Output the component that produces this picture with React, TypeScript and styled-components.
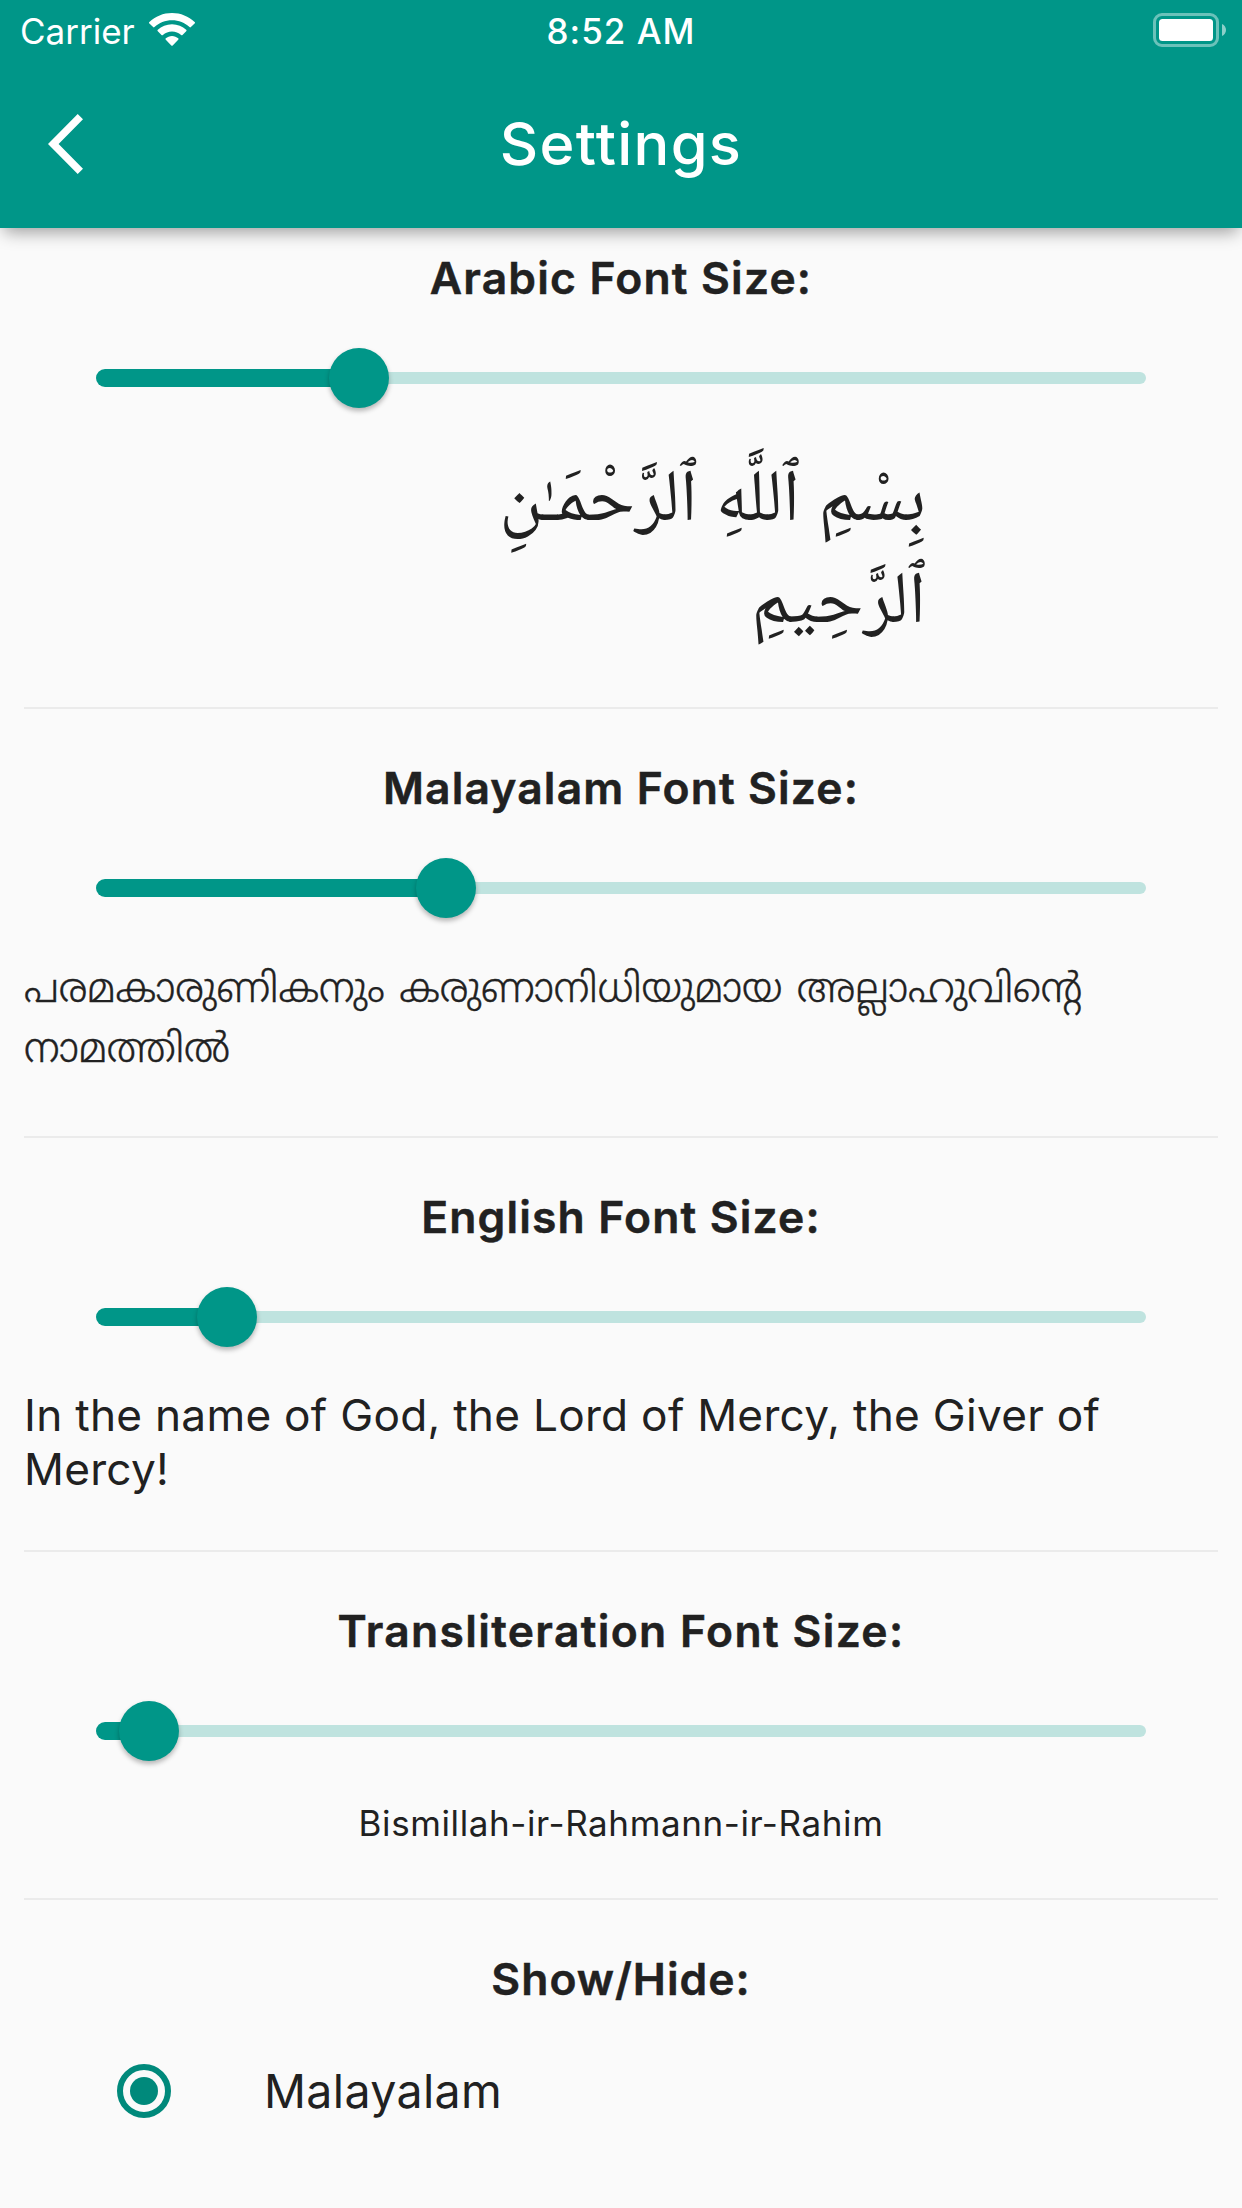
import React from 'react';
import styled, { createGlobalStyle } from 'styled-components';

const teal = '#009688';
const ink = '#212121';

const GlobalStyle = createGlobalStyle`
  * { box-sizing: border-box; }
  body { margin: 0; background: #fafafa; }
`;

const Screen = styled.main`
  width: 1242px;
  height: 2208px;
  overflow: hidden;
  background: #fafafa;
  color: ${ink};
  font-family: Inter, "Liberation Sans", sans-serif;
`;

const Header = styled.header`
  height: 228px;
  background: ${teal};
  color: #fff;
  box-shadow: 0 8px 16px -4px rgba(0, 0, 0, 0.38);
`;

const StatusBar = styled.div`
  display: grid;
  grid-template-columns: 1fr auto 1fr;
  align-items: center;
  height: 60px;
  padding: 2px 16px 0 16px;
  font-size: 35px;
  line-height: 58px;
`;

const Carrier = styled.div`
  display: flex;
  align-items: center;
  gap: 14px;
  padding-left: 4px;
  svg { margin-bottom: 2px; }
`;

const Clock = styled.time`
  font-weight: 500;
  letter-spacing: 1px;
`;

const Battery = styled.svg`
  justify-self: end;
  margin-bottom: 2px;
`;

const TitleBar = styled.div`
  display: grid;
  grid-template-columns: 168px 1fr 168px;
  align-items: center;
  height: 168px;
`;

const BackButton = styled.button`
  display: flex;
  width: 131px;
  height: 144px;
  padding: 0 0 0 48px;
  border: 0;
  align-items: center;
  background: none;
  color: inherit;
`;

const Title = styled.h1`
  margin: 0;
  padding-bottom: 2px;
  text-align: center;
  font-size: 59.5px;
  line-height: 80px;
  font-weight: 500;
  letter-spacing: 1.3px;
`;

const Section = styled.section<{ $first?: boolean }>`
  padding-top: ${p => (p.$first ? 23 : 52)}px;
`;

const Heading = styled.h2<{ $spacing: number }>`
  margin: 0;
  text-align: center;
  font-size: 44.4px;
  line-height: 54px;
  font-weight: 600;
  letter-spacing: ${p => p.$spacing}px;
  -webkit-text-stroke: 0.5px ${ink};
`;

const Slider = styled.div`
  display: flex;
  align-items: center;
  height: 142px;
  margin: 2px 96px 0;
`;

const Filled = styled.div`
  height: 18px;
  border-radius: 9px 0 0 9px;
  background: ${teal};
`;

const Remaining = styled.div`
  flex: 1;
  height: 12px;
  border-radius: 0 6px 6px 0;
  background: #bfe3df;
`;

const Thumb = styled.div`
  z-index: 1;
  flex: none;
  width: 60px;
  height: 60px;
  margin: 0 -30px;
  border-radius: 50%;
  background: ${teal};
  box-shadow: 0 3px 5px rgba(0, 0, 0, 0.28);
`;

const Preview = styled.div<{ $height: number }>`
  height: ${p => p.$height}px;
  padding: 0 24px;
`;

const ArabicText = styled.p`
  width: 902px;
  margin: 0;
  padding-top: 4px;
  font-family: "Noto Naskh Arabic", "DejaVu Sans", serif;
  font-size: 73.5px;
  line-height: 102px;
  word-spacing: 2px;
`;

const MalayalamText = styled.p`
  margin: 0;
  padding-top: 3px;
  font-family: "Noto Sans Malayalam", "Noto Sans", sans-serif;
  font-size: 40.4px;
  font-weight: 300;
  line-height: 60px;
  word-spacing: 2px;
  -webkit-text-stroke: 0.4px ${ink};
`;

const EnglishText = styled.p`
  margin: 0;
  font-size: 44.2px;
  line-height: 54px;
  letter-spacing: 0.26px;
`;

const Transliteration = styled.p`
  margin: 0;
  text-align: center;
  font-size: 35px;
  line-height: 43px;
  letter-spacing: 0.6px;
`;

const Divider = styled.hr`
  height: 2px;
  margin: 0 24px;
  border: 0;
  background: #ebebeb;
`;

const Option = styled.label`
  display: flex;
  align-items: center;
  height: 144px;
  margin-top: 13px;
  padding-left: 117px;
  gap: 93px;
  font-size: 46.5px;
  line-height: 54px;
  letter-spacing: 0.35px;
`;

const RadioRing = styled.span`
  display: grid;
  place-items: center;
  width: 54px;
  height: 54px;
  border: 6px solid #00897b;
  border-radius: 50%;
`;

const RadioDot = styled.span`
  width: 28px;
  height: 28px;
  border-radius: 50%;
  background: #00897b;
`;

function SizeSlider({ value }: { value: number }) {
  return (
    <Slider role="slider" aria-valuenow={value}>
      <Filled style={{ width: `${value * 100}%` }} />
      <Thumb />
      <Remaining />
    </Slider>
  );
}

function WifiIcon() {
  return (
    <svg width="46" height="34" viewBox="0 0 46 34" fill="#fff">
      <path d="M23 0C14.3 0 6.300 3.400.4 9.000a1 1 0 0 0 0 1.500l3.700 3.600a1 1 0 0 0 1.400 0C10.100 9.800 16.200 7.200 23 7.200s12.900 2.600 17.500 6.900a1 1 0 0 0 1.400 0l3.700-3.600a1 1 0 0 0 0-1.500C39.700 3.400 31.700 0 23 0z" />
      <path d="M23 11.200c-5.500 0-10.500 2.100-14.200 5.600a1 1 0 0 0 0 1.500l3.700 3.700a1 1 0 0 0 1.400 0c2.400-2.200 5.600-3.600 9.100-3.600s6.700 1.400 9.100 3.600a1 1 0 0 0 1.400 0l3.700-3.700a1 1 0 0 0 0-1.500C33.500 13.300 28.500 11.200 23 11.200z" />
      <path d="M23 22.900c-2.400 0-4.600.9-6.200 2.400a1 1 0 0 0 0 1.500l5.500 5.700a1 1 0 0 0 1.400 0l5.500-5.700a1 1 0 0 0 0-1.500c-1.600-1.500-3.800-2.400-6.200-2.400z" />
    </svg>
  );
}

function BatteryIcon() {
  return (
    <Battery width="73" height="34" viewBox="0 0 73 34">
      <rect x="1.500" y="1.500" width="63" height="31" rx="7.500" fill="none" stroke="#fff" strokeOpacity=".42" strokeWidth="3" />
      <rect x="6" y="6" width="54" height="22" rx="3.500" fill="#fff" />
      <path d="M69 11c2.600 1.200 4 3.400 4 6s-1.400 4.800-4 6z" fill="#fff" fillOpacity=".55" />
    </Battery>
  );
}

export default function App() {
  return (
    <Screen>
      <GlobalStyle />
      <Header>
        <StatusBar>
          <Carrier>
            Carrier
            <WifiIcon />
          </Carrier>
          <Clock>8:52 AM</Clock>
          <BatteryIcon />
        </StatusBar>
        <TitleBar>
          <BackButton aria-label="Back">
            <svg width="35" height="60" viewBox="0 0 35 60" fill="#fff">
              <path d="M35 5.300 29.700 0 0 30l29.700 30 5.300-5.300L10.600 30z" />
            </svg>
          </BackButton>
          <Title>Settings</Title>
        </TitleBar>
      </Header>

      <Section $first>
        <Heading $spacing={1.18}>Arabic Font Size:</Heading>
        <SizeSlider value={0.25} />
        <Preview $height={258}>
          <ArabicText dir="rtl" lang="ar">
            بِسْمِ ٱللَّهِ ٱلرَّحْمَـٰنِ
            <br />
            ٱلرَّحِيمِ
          </ArabicText>
        </Preview>
      </Section>
      <Divider />

      <Section>
        <Heading $spacing={1.14}>Malayalam Font Size:</Heading>
        <SizeSlider value={1 / 3} />
        <Preview $height={177}>
          <MalayalamText lang="ml">
            പരമകാരുണികനും കരുണാനിധിയുമായ അല്ലാഹുവിന്റെ
            <br />
            നാമത്തിൽ
          </MalayalamText>
        </Preview>
      </Section>
      <Divider />

      <Section>
        <Heading $spacing={1.16}>English Font Size:</Heading>
        <SizeSlider value={0.125} />
        <Preview $height={162}>
          <EnglishText>
            In the name of God, the Lord of Mercy, the Giver of
            <br />
            Mercy!
          </EnglishText>
        </Preview>
      </Section>
      <Divider />

      <Section>
        <Heading $spacing={1.34}>Transliteration Font Size:</Heading>
        <SizeSlider value={0.05} />
        <Preview $height={96}>
          <Transliteration>Bismillah-ir-Rahmann-ir-Rahim</Transliteration>
        </Preview>
      </Section>
      <Divider />

      <Section>
        <Heading $spacing={1}>Show/Hide:</Heading>
        <Option>
          <RadioRing>
            <RadioDot />
          </RadioRing>
          Malayalam
        </Option>
      </Section>
    </Screen>
  );
}
